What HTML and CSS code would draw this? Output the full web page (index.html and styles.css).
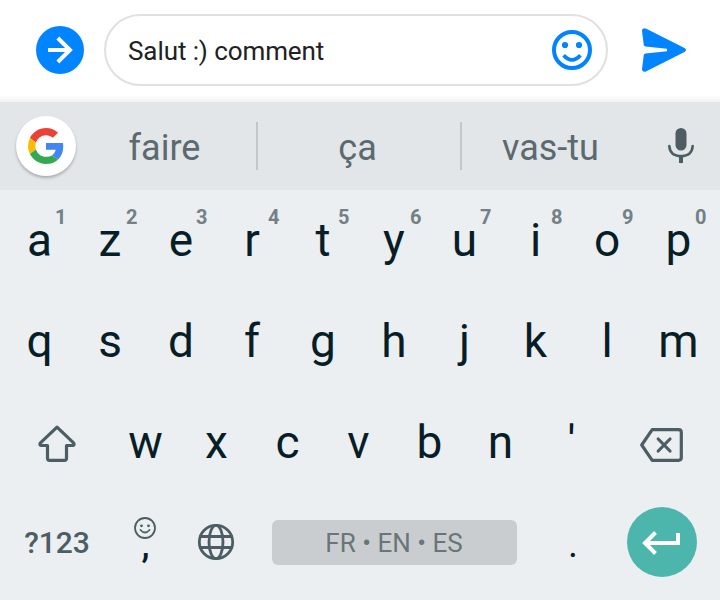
FILE: index.html
```html
<!DOCTYPE html>
<html lang="fr">
<head>
<meta charset="utf-8">
<title>Message</title>
<link rel="stylesheet" href="styles.css">
</head>
<body>
<header class="composer">
  <svg class="more" viewBox="0 0 48 48"><circle cx="24" cy="24" r="24" fill="#0084ff"/><path d="M12 24H34M21.800 12L34 24L21.800 36" fill="none" stroke="#fff" stroke-width="4"/></svg>
  <div class="field">
    <span class="message">Salut :) comment</span>
    <svg class="smile" viewBox="0 0 40 40"><circle cx="20" cy="20" r="18" fill="none" stroke="#0084ff" stroke-width="4"/><circle cx="13" cy="15" r="3.100" fill="#0084ff"/><circle cx="27" cy="15" r="3.100" fill="#0084ff"/><path d="M11.600 25.200Q20 34.500 28.400 25.200" fill="none" stroke="#0084ff" stroke-width="3.800"/></svg>
  </div>
  <svg class="send" viewBox="0 0 44 44"><path d="M0 3C0 .5 2 -.5 4.300 .7L42.500 20Q45.500 22 42.500 24L4.300 43.300C2 44.500 0 43.500 0 41L1.800 27Q2 25.700 3.500 25.500L25 23.200V20.800L3.500 18.500Q2 18.300 1.800 17Z" fill="#0084ff"/></svg>
</header>
<section class="suggestions">
  <div class="google"><svg viewBox="0 0 48 48"><path fill="#ea4335" d="M24 9.500c3.540 0 6.710 1.220 9.210 3.600l6.850-6.850C35.900 2.380 30.470 0 24 0 14.620 0 6.510 5.380 2.560 13.220l7.980 6.190C12.430 13.720 17.740 9.500 24 9.500z"/><path fill="#4285f4" d="M46.980 24.550c0-1.570-.15-3.090-.38-4.550H24v9.020h12.940c-.58 2.960-2.260 5.480-4.780 7.180l7.730 6c4.510-4.180 7.090-10.360 7.090-17.650z"/><path fill="#fbbc05" d="M10.530 28.590A14.500 14.500 0 0 1 9.770 24c0-1.600.27-3.140.76-4.590l-7.980-6.190A23.900 23.900 0 0 0 0 24c0 3.880.92 7.540 2.560 10.780z"/><path fill="#34a853" d="M24 48c6.480 0 11.930-2.130 15.890-5.810l-7.730-6C30 37.640 27.240 38.490 24 38.490c-6.260 0-11.570-4.220-13.470-9.910l-7.980 6.190C6.510 42.620 14.620 48 24 48z"/></svg></div>
  <span class="word first">faire</span>
  <span class="word">ça</span>
  <span class="word last">vas-tu</span>
  <svg class="mic" viewBox="0 0 26 36"><rect x="7.500" width="11" height="22.500" rx="5.500" fill="#4c5d64"/><path d="M1.300 18Q2 28 13 28.200Q24 28 24.700 18M13 28V34" fill="none" stroke="#4c5d64" stroke-width="2.600" stroke-linecap="round"/><path d="M11 28h4v7h-4z" fill="#4c5d64"/></svg>
</section>
<main class="keyboard">
  <div class="row letters">
    <span class="key">a<sup>1</sup></span><span class="key">z<sup>2</sup></span><span class="key">e<sup>3</sup></span><span class="key">r<sup>4</sup></span><span class="key">t<sup>5</sup></span><span class="key">y<sup>6</sup></span><span class="key">u<sup>7</sup></span><span class="key">i<sup>8</sup></span><span class="key">o<sup>9</sup></span><span class="key">p<sup>0</sup></span>
  </div>
  <div class="row letters">
    <span class="key">q</span><span class="key">s</span><span class="key">d</span><span class="key">f</span><span class="key">g</span><span class="key">h</span><span class="key">j</span><span class="key">k</span><span class="key">l</span><span class="key">m</span>
  </div>
  <div class="row third">
    <span class="key"><svg class="shift" viewBox="0 0 38 37"><path d="M19 2.200L2.200 18.200Q1.300 20.500 3.500 20.500H9.500V33.200Q9.500 35.300 11.600 35.300H26.400Q28.500 35.300 28.500 33.200V20.500H34.500Q36.700 20.500 35.800 18.200Z"/></svg></span>
    <span class="key">w</span><span class="key">x</span><span class="key">c</span><span class="key">v</span><span class="key">b</span><span class="key">n</span><span class="key">'</span>
    <span class="key"><svg class="erase" viewBox="0 0 43 34"><path d="M12.200 1.700H38.500Q41.300 1.700 41.300 4.500V29.500Q41.300 32.300 38.500 32.300H12.200L1.700 17ZM18.200 11L30 23M30 11L18.200 23"/></svg></span>
  </div>
  <div class="row fourth">
    <span class="key symbols">?123</span>
    <span class="key comma"><svg viewBox="0 0 22 22"><circle cx="11" cy="11" r="10" /><path d="M6.500 13Q11 18 15.500 13"/><circle class="eye" cx="7.500" cy="8.800" r="1.400"/><circle class="eye" cx="14.500" cy="8.800" r="1.400"/></svg><span>,</span></span>
    <span class="key"><svg class="globe" viewBox="0 0 36 36"><circle cx="18" cy="18" r="16.700"/><ellipse cx="18" cy="18" rx="7" ry="16.700"/><path d="M2.500 12.500H33.500M2.500 23.500H33.500"/></svg></span>
    <span class="space">FR • EN • ES</span>
    <span class="key period">.</span>
    <span class="key"><span class="enter"><svg viewBox="0 0 38 24"><path d="M13.500 1.500L3 12L13.500 22.500M2 12H36V2"/></svg></span></span>
  </div>
</main>
</body>
</html>
```
FILE: styles.css
```css
* { box-sizing: border-box; }
body { margin: 0; width: 720px; height: 600px; overflow: hidden; background: #ebeff2; font-family: Roboto, "Liberation Sans", sans-serif; }
svg { display: block; flex: none; overflow: visible; }
.composer { height: 102px; padding: 14px 34px 16px 36px; display: flex; align-items: center; background: linear-gradient(#fff 95px, #f1f2f3 102px); }
.more { width: 48px; height: 48px; margin-right: 20px; }
.field { width: 504px; height: 72px; border: 2px solid #e0e0e0; border-radius: 36px; background: #fff; display: flex; align-items: center; justify-content: space-between; padding: 0 14px 0 22px; margin-right: 34px; }
.message { font-size: 26px; line-height: 30px; padding-top: 2px; color: #202122; white-space: nowrap; letter-spacing: -0.09px; }
.smile { width: 40px; height: 40px; }
.send { width: 44px; height: 44px; }
.suggestions { height: 88px; background: #e2e6e9; display: flex; align-items: center; }
.google { width: 60px; height: 60px; margin-left: 16px; border-radius: 50%; background: #fff; box-shadow: 0 2px 3px #00000040; display: flex; align-items: center; justify-content: center; }
.google svg { width: 36px; height: 36px; }
.word { width: 204px; height: 48px; line-height: 52px; text-align: center; font-size: 36px; color: #5c696f; border-right: 2px solid #c2c7ca; padding-right: 3px; }
.word.first { width: 182px; }
.word.last { width: 180px; border: 0; }
.mic { width: 26px; height: 36px; margin-left: 26px; }
.keyboard { padding: 0 6px 0 4px; color: #071e27; font-size: 46px; }
.row { display: grid; height: 101px; align-items: center; }
.letters { grid-template-columns: 71px 70px 72px 70px 72px 70px 71px 71px 72px 71px; }
.third { grid-template-columns: 106px repeat(7, 71px) 107px; }
.fourth { grid-template-columns: 106px 71px 71px 284px 71px 107px; }
.key { position: relative; height: 60px; line-height: 60px; margin-top: -2px; display: flex; align-items: center; justify-content: center; }
sup { position: absolute; left: 51px; top: -5px; font-size: 20px; line-height: 24px; font-weight: 700; color: #748086; }
.key:last-child sup { left: 52px; }
.key svg { fill: none; stroke: #4c5d64; stroke-width: 3.2; stroke-linejoin: round; stroke-linecap: round; }
.shift { width: 38px; height: 37px; margin-top: 4px; }
.erase { width: 43px; height: 34px; margin: 7px 0 0 2px; }
.symbols { font-size: 30px; font-weight: 500; color: #4c5d64; }
.comma { flex-direction: column; justify-content: flex-start; }
.comma svg { width: 22px; height: 22px; margin: 4px 2px 0 0; stroke-width: 1.800; }
.comma .eye { fill: #4c5d64; stroke: none; }
.comma span { line-height: 40px; margin-top: -14px; font-size: 36px; font-weight: 500; }
.globe { width: 36px; height: 36px; margin: 0 2px 2px 0; }
.key .globe { stroke-width: 2.800; }
.space { height: 45px; width: 245px; justify-self: center; border-radius: 6px; background: #c9cdcf; color: #697579; font-size: 26px; line-height: 46px; text-align: center; white-space: nowrap; margin-top: -2px; }
.period { font-size: 38px; padding: 3px 0 0 3px; }
.enter { width: 70px; height: 70px; flex: none; border-radius: 50%; background: #4db6ac; display: flex; align-items: center; justify-content: center; margin: -2px 0 0 2px; }
.key .enter svg { width: 38px; height: 24px; margin: 3px 1px 0 0; stroke: #fff; stroke-width: 4; stroke-linecap: butt; stroke-linejoin: miter; }
```
